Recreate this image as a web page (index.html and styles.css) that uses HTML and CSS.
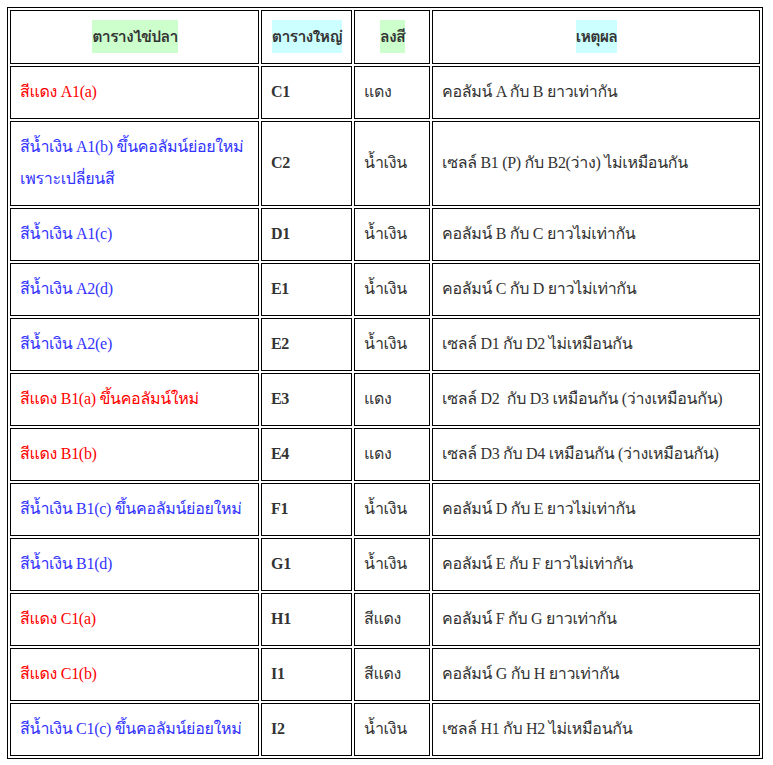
FILE: index.html
```html
<!DOCTYPE html>
<html lang="th">
<head>
<meta charset="utf-8">
<title>ตารางไข่ปลา</title>
<link rel="stylesheet" href="styles.css">
</head>
<body>
<table class="grid">
  <colgroup>
    <col class="c1"><col class="c2"><col class="c3"><col class="c4">
  </colgroup>
  <thead>
    <tr>
      <th><span class="hl-green">ตารางไข่ปลา</span></th>
      <th><span class="hl-cyan">ตารางใหญ่</span></th>
      <th><span class="hl-green">ลงสี</span></th>
      <th><span class="hl-cyan">เหตุผล</span></th>
    </tr>
  </thead>
  <tbody>
    <tr><td class="red">สีแดง A1(a)</td><td class="b">C1</td><td>แดง</td><td>คอลัมน์ A กับ B ยาวเท่ากัน</td></tr>
    <tr><td class="blue">สีน้ำเงิน A1(b) ขึ้นคอลัมน์ย่อยใหม่<br>เพราะเปลี่ยนสี</td><td class="b">C2</td><td>น้ำเงิน</td><td>เซลล์ B1 (P) กับ B2(ว่าง) ไม่เหมือนกัน</td></tr>
    <tr><td class="blue">สีน้ำเงิน A1(c)</td><td class="b">D1</td><td>น้ำเงิน</td><td>คอลัมน์ B กับ C ยาวไม่เท่ากัน</td></tr>
    <tr><td class="blue">สีน้ำเงิน A2(d)</td><td class="b">E1</td><td>น้ำเงิน</td><td>คอลัมน์ C กับ D ยาวไม่เท่ากัน</td></tr>
    <tr><td class="blue">สีน้ำเงิน A2(e)</td><td class="b">E2</td><td>น้ำเงิน</td><td>เซลล์ D1 กับ D2 ไม่เหมือนกัน</td></tr>
    <tr><td class="red">สีแดง B1(a) ขึ้นคอลัมน์ใหม่</td><td class="b">E3</td><td>แดง</td><td>เซลล์ D2&nbsp; กับ D3 เหมือนกัน (ว่างเหมือนกัน)</td></tr>
    <tr><td class="red">สีแดง B1(b)</td><td class="b">E4</td><td>แดง</td><td>เซลล์ D3 กับ D4 เหมือนกัน (ว่างเหมือนกัน)</td></tr>
    <tr><td class="blue">สีน้ำเงิน B1(c) ขึ้นคอลัมน์ย่อยใหม่</td><td class="b">F1</td><td>น้ำเงิน</td><td>คอลัมน์ D กับ E ยาวไม่เท่ากัน</td></tr>
    <tr><td class="blue">สีน้ำเงิน B1(d)</td><td class="b">G1</td><td>น้ำเงิน</td><td>คอลัมน์ E กับ F ยาวไม่เท่ากัน</td></tr>
    <tr><td class="red">สีแดง C1(a)</td><td class="b">H1</td><td>สีแดง</td><td>คอลัมน์ F กับ G ยาวเท่ากัน</td></tr>
    <tr><td class="red">สีแดง C1(b)</td><td class="b">I1</td><td>สีแดง</td><td>คอลัมน์ G กับ H ยาวเท่ากัน</td></tr>
    <tr><td class="blue">สีน้ำเงิน C1(c) ขึ้นคอลัมน์ย่อยใหม่</td><td class="b">I2</td><td>น้ำเงิน</td><td>เซลล์ H1 กับ H2 ไม่เหมือนกัน</td></tr>
  </tbody>
</table>
</body>
</html>
```
FILE: styles.css
```css
html, body {
  background: #ffffff;
}
body {
  margin: 7px;
  font-family: "Liberation Serif", "Loma", "Noto Sans Thai Looped", serif;
  font-size: 16px;
  color: #333333;
}
.grid {
  width: 756px;
  table-layout: fixed;
  border: 1px solid #000;
  border-spacing: 2px;
  border-collapse: separate;
}
.c1 { width: 249px; }
.c2 { width: 91px; }
.c3 { width: 76px; }
.c4 { width: 328px; }
.grid th, .grid td {
  border: 1px solid #000;
  padding: 9px 8px 10px 9px;
  line-height: 32px;
  height: 32px;
  vertical-align: middle;
  text-align: left;
  white-space: nowrap;
  letter-spacing: -0.3px;
}
.grid th {
  text-align: center;
  font-weight: bold;
  letter-spacing: -0.8px;
}
.hl-green, .hl-cyan {
  display: inline-block;
  line-height: 33px;
}
.hl-green { background: #ccffcc; }
.hl-cyan { background: #ccffff; }
.red { color: #ff0000; }
.blue { color: #3333ff; }
.b { font-weight: bold; letter-spacing: 0; }
```
